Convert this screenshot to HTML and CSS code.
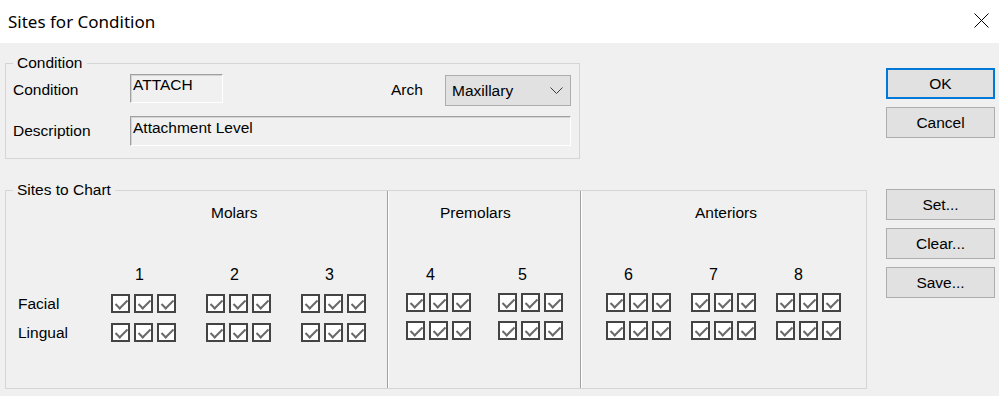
FILE: index.html
```html
<!DOCTYPE html>
<html lang="en">
<head>
    <meta charset="UTF-8">
    <title>Sites for Condition</title>
    <link rel="stylesheet" href="styles.css">
</head>
<body>
    <div class="titlebar">
        <span class="title">Sites for Condition</span>
        <svg class="close" width="15" height="15" viewBox="0 0 15 15">
            <path d="M0.5 0.5 L14.5 14.5 M14.5 0.5 L0.5 14.5" stroke="#000" stroke-width="1" fill="none"/>
        </svg>
    </div>

    <div class="dialog">
        <div class="left">
            <fieldset class="group">
                <legend>Condition</legend>
                <div class="cond-body">
                    <div class="field-row first">
                        <span class="lbl">Condition</span>
                        <div class="textbox code">ATTACH</div>
                        <span class="lbl arch">Arch</span>
                        <div class="select">
                            <span>Maxillary</span>
                            <svg width="13" height="8" viewBox="0 0 13 8">
                                <polyline points="0.5,0.5 6.5,6.5 12.5,0.5" fill="none" stroke="#3c3c3c" stroke-width="1"/>
                            </svg>
                        </div>
                    </div>
                    <div class="field-row second">
                        <span class="lbl">Description</span>
                        <div class="textbox desc">Attachment Level</div>
                    </div>
                </div>
            </fieldset>

            <fieldset class="group sites">
                <legend>Sites to Chart</legend>
                <div class="sections">
                    <div class="section molars">
                        <div class="sec-title">Molars</div>
                        <div class="teeth-row nums">
                            <span class="row-label"></span>
                            <span class="num">1</span><span class="num">2</span><span class="num">3</span>
                        </div>
                        <div class="teeth-row">
                            <span class="row-label">Facial</span>
                            <span class="trio"><i class="cb"></i><i class="cb"></i><i class="cb"></i></span>
                            <span class="trio"><i class="cb"></i><i class="cb"></i><i class="cb"></i></span>
                            <span class="trio"><i class="cb"></i><i class="cb"></i><i class="cb"></i></span>
                        </div>
                        <div class="teeth-row">
                            <span class="row-label">Lingual</span>
                            <span class="trio"><i class="cb"></i><i class="cb"></i><i class="cb"></i></span>
                            <span class="trio"><i class="cb"></i><i class="cb"></i><i class="cb"></i></span>
                            <span class="trio"><i class="cb"></i><i class="cb"></i><i class="cb"></i></span>
                        </div>
                    </div>

                    <div class="section premolars">
                        <div class="sec-title">Premolars</div>
                        <div class="teeth-row nums">
                            <span class="num">4</span><span class="num">5</span>
                        </div>
                        <div class="teeth-row">
                            <span class="trio"><i class="cb"></i><i class="cb"></i><i class="cb"></i></span>
                            <span class="trio"><i class="cb"></i><i class="cb"></i><i class="cb"></i></span>
                        </div>
                        <div class="teeth-row">
                            <span class="trio"><i class="cb"></i><i class="cb"></i><i class="cb"></i></span>
                            <span class="trio"><i class="cb"></i><i class="cb"></i><i class="cb"></i></span>
                        </div>
                    </div>

                    <div class="section anteriors">
                        <div class="sec-title">Anteriors</div>
                        <div class="teeth-row nums">
                            <span class="num">6</span><span class="num">7</span><span class="num">8</span>
                        </div>
                        <div class="teeth-row">
                            <span class="trio"><i class="cb"></i><i class="cb"></i><i class="cb"></i></span>
                            <span class="trio"><i class="cb"></i><i class="cb"></i><i class="cb"></i></span>
                            <span class="trio"><i class="cb"></i><i class="cb"></i><i class="cb"></i></span>
                        </div>
                        <div class="teeth-row">
                            <span class="trio"><i class="cb"></i><i class="cb"></i><i class="cb"></i></span>
                            <span class="trio"><i class="cb"></i><i class="cb"></i><i class="cb"></i></span>
                            <span class="trio"><i class="cb"></i><i class="cb"></i><i class="cb"></i></span>
                        </div>
                    </div>
                </div>
            </fieldset>
        </div>

        <div class="buttons">
            <div class="btn-stack">
                <button class="btn default">OK</button>
                <button class="btn">Cancel</button>
            </div>
            <div class="btn-stack lower">
                <button class="btn">Set...</button>
                <button class="btn">Clear...</button>
                <button class="btn">Save...</button>
            </div>
        </div>
    </div>
</body>
</html>
```

FILE: styles.css
```css
body {
    margin: 0;
    background: #f0f0f0;
    font-family: "Liberation Sans", Arial, sans-serif;
    font-size: 15.5px;
    line-height: 18px;
    color: #000;
}

.titlebar {
    height: 43px;
    background: #fff;
    display: flex;
    align-items: center;
    justify-content: space-between;
    padding: 0 10px 0 8px;
}

.title {
    font-family: "Noto Sans", sans-serif;
    font-size: 17px;
}

.close {
    display: block;
    margin-top: -3px;
}

.dialog {
    display: flex;
    padding-left: 5px;
}

.left {
    width: 862px;
    margin-top: 11px;
}

/* group boxes */
.group {
    margin: 0;
    padding: 0;
    border: 1px solid #d5d5d5;
    min-width: 0;
}

.group legend {
    margin-left: 7px;
    padding: 0 4px;
    line-height: 18px;
}

.group:first-child {
    width: 575px;
    box-sizing: border-box;
}

.cond-body {
    padding: 2px 8px 12px 7px;
}

.field-row {
    display: flex;
    align-items: flex-start;
}

.field-row.second {
    margin-top: 10px;
}

.lbl {
    width: 117px;
    flex-shrink: 0;
    margin-top: 7px;
}

.field-row.second .lbl {
    margin-top: 6px;
}

.lbl.arch {
    width: 54px;
    margin-left: 168px;
}

.textbox {
    box-sizing: border-box;
    height: 29px;
    padding: 1px 2px;
    border: 1px solid;
    border-color: #a0a0a0 #fff #fff #a0a0a0;
    box-shadow: inset 1px 1px 0 #d4d4d4;
    background: #f0f0f0;
}

.textbox.code {
    width: 93px;
}

.textbox.desc {
    width: 441px;
    height: 30px;
    padding-top: 2px;
}

.select {
    box-sizing: border-box;
    width: 126px;
    height: 31px;
    margin-top: 1px;
    border: 1px solid #adadad;
    background: #e1e1e1;
    display: flex;
    align-items: center;
    justify-content: space-between;
    padding: 0 7px 0 6px;
}

.select svg {
    display: block;
}

/* sites to chart */
.sites {
    margin-top: 22px;
}

.sections {
    display: flex;
    margin-top: -8px;
}

.section {
    padding: 13px 0 46px;
}

.molars {
    width: 381px;
}

.premolars {
    width: 192px;
    border-left: 1px solid #a0a0a0;
    box-shadow: inset 1px 0 0 #fff;
}

.anteriors {
    flex: 1;
    border-left: 1px solid #a0a0a0;
    box-shadow: inset 1px 0 0 #fff;
}

.sec-title {
    height: 18px;
}

.molars .sec-title { padding-left: 205px; }
.premolars .sec-title { padding-left: 52px; }
.anteriors .sec-title { padding-left: 114px; }

.teeth-row {
    display: flex;
    align-items: center;
    margin-top: 9px;
}

.teeth-row.nums {
    margin-top: 44px;
    font-size: 16px;
}

.molars .teeth-row { padding-left: 12px; gap: 30px; }
.premolars .teeth-row { padding-left: 18px; gap: 27px; }
.anteriors .teeth-row { padding-left: 25px; gap: 20px; }

.row-label {
    width: 93px;
    margin-right: -30px;
    margin-top: 2px;
}

.num {
    width: 65px;
    box-sizing: border-box;
}

.molars .num { padding-left: 24px; }
.premolars .num { padding-left: 20px; }
.anteriors .num { padding-left: 18px; }

.trio {
    display: flex;
    gap: 4px;
}

.cb {
    position: relative;
    width: 19px;
    height: 19px;
    box-sizing: border-box;
    border: 2px solid #444;
    background: #fff;
}

.cb::after {
    content: "";
    position: absolute;
    left: 5px;
    top: 1px;
    width: 5px;
    height: 10px;
    border: solid #6a6a6a;
    border-width: 0 2px 2px 0;
    transform: rotate(45deg);
}

/* buttons */
.buttons {
    margin-left: 19px;
    margin-top: 25px;
    width: 109px;
}

.btn-stack {
    display: flex;
    flex-direction: column;
    gap: 8px;
}

.btn-stack.lower {
    margin-top: 51px;
}

.btn {
    box-sizing: border-box;
    height: 31px;
    width: 100%;
    border: 1px solid #adadad;
    background: #e1e1e1;
    font: inherit;
    color: #000;
    padding: 0;
}

.btn.default {
    border: 2px solid #0078d7;
}
```
